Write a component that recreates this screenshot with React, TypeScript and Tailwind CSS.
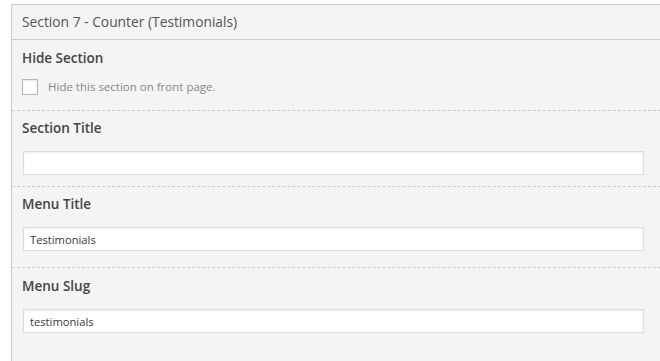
export default function App() {
  const font = { fontFamily: '"Open Sans", "Noto Sans", sans-serif' };
  const inputCls =
    "ml-[1px] mt-[13px] block h-[24px] w-[621px] border border-[#dddddd] bg-white px-[6px] text-[11.2px] text-[#32373c] shadow-[inset_0_1px_2px_rgba(0,0,0,0.07)] outline-none";

  return (
    <div className="h-[361px] w-[660px] overflow-hidden bg-white pl-[11px] pt-[4px]" style={font}>
      <div className="h-[400px] w-[700px] border-l border-t border-[#cccccc] bg-[#f4f4f4]">
        {/* Header */}
        <div className="flex h-[35px] items-center border-b border-[#cccccc] pl-[10px] text-[13.8px] text-[#555555]">
          Section 7 - Counter (Testimonials)
        </div>

        {/* Hide section */}
        <div className="border-b border-dashed border-[#cccccc] px-[10px] pb-[15px] pt-[8px]">
          <div className="text-[13.5px] font-semibold leading-[20px] text-[#444444]">Hide Section</div>
          <label className="mt-[11px] flex items-center gap-[10px]">
            <span className="block h-[16px] w-[16px] border border-[#b4b9be] bg-white shadow-[inset_0_1px_2px_rgba(0,0,0,0.1)]" />
            <span className="text-[11.5px] leading-[16px] text-[#888888]">Hide this section on front page.</span>
          </label>
        </div>

        {/* Section title */}
        <div className="border-b border-dashed border-[#cccccc] px-[10px] pb-[11px] pt-[7px]">
          <div className="text-[13.5px] font-semibold leading-[20px] text-[#444444]">Section Title</div>
          <input className={inputCls} defaultValue="" />
        </div>

        {/* Menu title */}
        <div className="border-b border-dashed border-[#cccccc] px-[10px] pb-[16px] pt-[7px]">
          <div className="text-[13.5px] font-semibold leading-[20px] text-[#444444]">Menu Title</div>
          <input className={inputCls} defaultValue="Testimonials" />
        </div>

        {/* Menu slug */}
        <div className="px-[10px] pt-[8px]">
          <div className="text-[13.5px] font-semibold leading-[20px] text-[#444444]">Menu Slug</div>
          <input className={inputCls} defaultValue="testimonials" />
        </div>
      </div>
    </div>
  );
}
